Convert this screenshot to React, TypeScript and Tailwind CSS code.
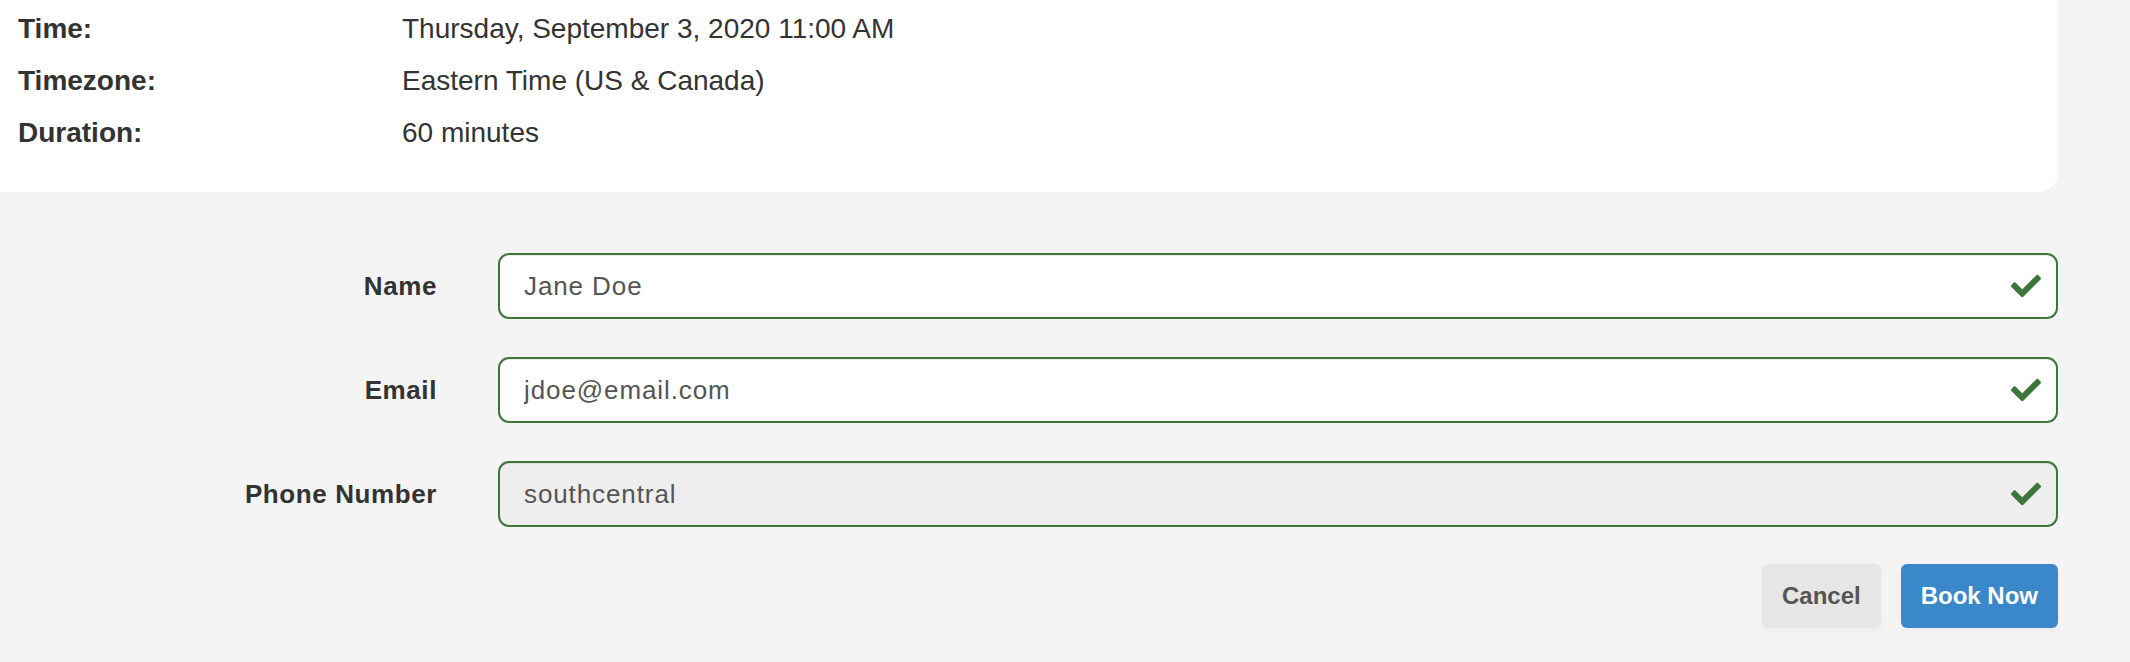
const details = [
  { label: "Time:", value: "Thursday, September 3, 2020 11:00 AM" },
  { label: "Timezone:", value: "Eastern Time (US & Canada)" },
  { label: "Duration:", value: "60 minutes" },
];

const fields = [
  { label: "Name", value: "Jane Doe", readOnly: false },
  { label: "Email", value: "jdoe@email.com", readOnly: false },
  { label: "Phone Number", value: "southcentral", readOnly: true },
];

function Check() {
  return (
    <svg viewBox="0 65 512 382" className="h-[24px] w-[30px] fill-[#3c763d]">
      <path d="M173.898 439.404l-166.4-166.4c-9.997-9.997-9.997-26.206 0-36.204l36.203-36.204c9.997-9.998 26.207-9.998 36.204 0L192 312.69 432.095 72.596c9.997-9.997 26.207-9.997 36.204 0l36.203 36.204c9.997 9.997 9.997 26.206 0 36.204l-294.4 294.401c-9.998 9.997-26.207 9.997-36.204-.001z" />
    </svg>
  );
}

export default function App() {
  return (
    <div className="min-h-[662px] bg-[#f4f4f4] pr-[72px] font-['Liberation_Sans',Arial,sans-serif] text-[#333]">
      <section className="rounded-br-[20px] bg-white pb-[33px] pt-[3px]">
        {details.map((d) => (
          <div key={d.label} className="flex text-[28px] leading-[52px]">
            <div className="w-[402px] pl-[18px] font-bold">{d.label}</div>
            <div>{d.value}</div>
          </div>
        ))}
      </section>

      <form className="flex flex-col gap-[38px] pt-[61px]">
        {fields.map((f) => (
          <div key={f.label} className="flex items-center">
            <label className="w-[437px] shrink-0 text-right text-[26px] font-bold tracking-[0.6px] text-[#333]">
              {f.label}
            </label>
            <div className="relative ml-[61px] flex-1">
              <input
                readOnly
                value={f.value}
                className={`h-[66px] w-full rounded-[11px] border-2 border-[#3c763d] pl-[24px] pr-[60px] text-[26px] tracking-[0.9px] text-[#555] shadow-[inset_0_1px_1px_rgba(0,0,0,0.075)] outline-none ${
                  f.readOnly ? "bg-[#eeeeee]" : "bg-white"
                }`}
              />
              <div className="absolute right-[17px] top-1/2 -translate-y-1/2">
                <Check />
              </div>
            </div>
          </div>
        ))}
      </form>

      <div className="flex justify-end gap-[20px] pt-[37px]">
        <button className="h-[64px] rounded-[6px] bg-[#e6e6e6] px-[20px] text-[24px] font-bold text-[#555] shadow-[0_2px_6px_rgba(0,0,0,0.04)]">
          Cancel
        </button>
        <button className="h-[64px] rounded-[6px] bg-[#3a87ca] px-[20px] text-[24px] font-bold text-white shadow-[0_2px_6px_rgba(0,0,0,0.04)]">
          Book Now
        </button>
      </div>
    </div>
  );
}
